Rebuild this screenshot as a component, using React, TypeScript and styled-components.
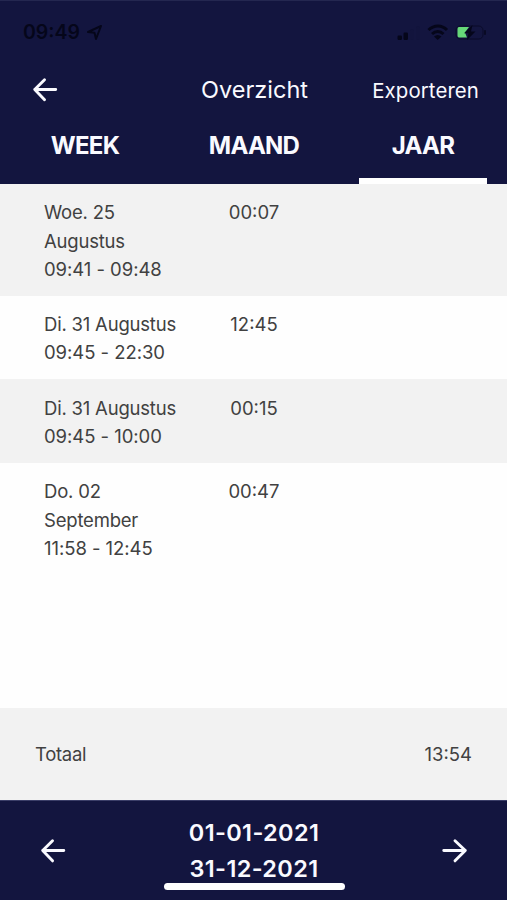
import React from "react";
import styled, { createGlobalStyle } from "styled-components";

const NAVY = "#13153f";
const GREY = "#f2f2f2";

const GlobalStyle = createGlobalStyle`
  * { box-sizing: border-box; }
  body { margin: 0; background: #fff; }
  button { font: inherit; color: inherit; background: none; border: 0; padding: 0; }
`;

const Screen = styled.div`
  display: flex;
  flex-direction: column;
  width: 507px;
  height: 900px;
  overflow: hidden;
  background: #fefefe;
  color: #414141;
  font-family: Inter, "Liberation Sans", sans-serif;
  font-size: 18.5px;
  line-height: 28.35px;
`;

const Header = styled.header`
  flex: none;
  display: flex;
  flex-direction: column;
  height: 184px;
  background: ${NAVY};
  color: #fafaff;
  border-top: 1px solid #242750;
`;

const StatusBar = styled.div`
  display: flex;
  align-items: center;
  justify-content: space-between;
  height: 62px;
  padding: 0 20px 0 23px;
  color: #05061a;
`;

const Clock = styled.div`
  display: flex;
  align-items: center;
  gap: 6px;
  font-size: 19.5px;
  font-weight: 600;
`;

const TitleBar = styled.div`
  display: grid;
  grid-template-columns: 1fr auto 1fr;
  align-items: center;
  height: 54px;
  padding: 0 28px 0 30px;
`;

const IconButton = styled.button`
  display: flex;
  width: 30px;
  height: 30px;
`;

const Title = styled.h1`
  margin: 0;
  padding-top: 1px;
  font-size: 23.5px;
  font-weight: 400;
`;

const Export = styled.button`
  && {
    justify-self: end;
    padding-top: 2px;
    font-size: 20.4px;
    letter-spacing: 0.1px;
  }
`;

const Tabs = styled.nav`
  display: grid;
  grid-template-columns: repeat(3, 128px);
  justify-content: space-between;
  flex: 1;
  padding: 0 20px 0 21px;
`;

const Tab = styled.button<{ $active?: boolean }>`
  && {
    padding-bottom: 4px;
    border-bottom: 6px solid ${(p) => (p.$active ? "#fff" : "transparent")};
    font-size: 24px;
    font-weight: 650;
    line-height: 53px;
    letter-spacing: -0.75px;
  }
`;

const List = styled.main`
  flex: 1;
`;

const Row = styled.div`
  display: grid;
  grid-template-columns: 140px 140px;
  padding: 14.2px 44px 12.7px;
  &:nth-child(odd) { background: ${GREY}; }
`;

const Duration = styled.span`
  text-align: center;
`;

const Line = styled.div`
  letter-spacing: -0.2px;
  white-space: nowrap;
  &:last-child { letter-spacing: -0.05px; }
`;

const Total = styled.section`
  flex: none;
  display: flex;
  align-items: center;
  justify-content: space-between;
  height: 92px;
  padding: 1px 35px 0;
  background: ${GREY};
`;

const TotalLabel = styled.span`
  letter-spacing: -0.3px;
`;

const Footer = styled.footer`
  position: relative;
  flex: none;
  display: flex;
  justify-content: space-between;
  height: 100px;
  padding: 35px 37px 0 38px;
  border-top: 1px solid #3b3e68;
  background: ${NAVY};
  color: #fafaff;
`;

const Period = styled.div`
  margin-top: -21px;
  font-size: 23.5px;
  font-weight: 600;
  line-height: 36px;
  letter-spacing: 0.35px;
  text-align: center;
`;

const HomeIndicator = styled.div`
  position: absolute;
  left: 164px;
  bottom: 10.5px;
  width: 180.5px;
  height: 7px;
  border-radius: 4px;
  background: #fff;
`;

const Arrow = ({ right }: { right?: boolean }) => (
  <svg width="32" height="30" viewBox="0 0 32 30" fill="none" stroke="currentColor" strokeWidth="3.1" strokeLinecap="round" strokeLinejoin="round">
    <path d={right ? "M4 14.5H27M16 4L27 14.5L16 25.5" : "M27.5 14.5H5M15.5 4L5 14.5L15.5 25.5"} />
  </svg>
);

const LocationIcon = () => (
  <svg width="17" height="17" viewBox="0 0 17 17" fill="none" stroke="currentColor" strokeWidth="2" strokeLinejoin="round">
    <path d="M15 2L2 8L8.5 8.7L10 15Z" />
  </svg>
);

const StatusIcons = () => (
  <svg width="92" height="20" viewBox="0 0 92 20" fill="none">
    <rect x="2.5" y="13.5" width="4.5" height="4.5" rx="1.2" fill="#05061a" />
    <rect x="8.5" y="10.5" width="4.5" height="7.5" rx="1.2" fill="#05061a" />
    <rect x="15" y="7" width="4" height="11" rx="1.2" fill="#12143d" />
    <rect x="21" y="4" width="4" height="14" rx="1.2" fill="#12143d" />
    <path d="M33.5 8C39 2.5 47 2.5 52 8M37 12C40.5 8.8 45 8.8 48.5 12" stroke="#05061a" strokeWidth="3" />
    <path d="M39 14.5Q42.5 11.5 46.5 14.5L42.7 18Z" fill="#05061a" />
    <rect x="61" y="4" width="27" height="13" rx="4.2" stroke="#0a0b29" />
    <path d="M90 9V12" stroke="#090a24" strokeWidth="2" strokeLinecap="round" />
    <path d="M64 5H74L70 10.5L72 15.5H64Q62.5 15.5 62.5 13.5V7Q62.5 5 64 5Z" fill="#66d878" />
    <path d="M77.5 3L69 11.2H73.5L72 18L80.5 9.5H76Z" fill="#05061a" />
  </svg>
);

const BackButton = styled(IconButton)`
  svg { width: 30px; height: 28px; margin: 1px 0 0 0; }
`;

const entries = [
  { lines: ["Woe. 25", "Augustus", "09:41 - 09:48"], duration: "00:07" },
  { lines: ["Di. 31 Augustus", "09:45 - 22:30"], duration: "12:45" },
  { lines: ["Di. 31 Augustus", "09:45 - 10:00"], duration: "00:15" },
  { lines: ["Do. 02", "September", "11:58 - 12:45"], duration: "00:47" },
];

export default function App() {
  return (
    <>
      <GlobalStyle />
      <Screen>
        <Header>
          <StatusBar>
            <Clock>09:49 <LocationIcon /></Clock>
            <StatusIcons />
          </StatusBar>
          <TitleBar>
            <BackButton aria-label="Terug"><Arrow /></BackButton>
            <Title>Overzicht</Title>
            <Export>Exporteren</Export>
          </TitleBar>
          <Tabs>
            <Tab>WEEK</Tab>
            <Tab>MAAND</Tab>
            <Tab $active>JAAR</Tab>
          </Tabs>
        </Header>
        <List>
          {entries.map((entry, i) => (
            <Row key={i}>
              <div>{entry.lines.map((line) => <Line key={line}>{line}</Line>)}</div>
              <Duration>{entry.duration}</Duration>
            </Row>
          ))}
        </List>
        <Total><TotalLabel>Totaal</TotalLabel><span>13:54</span></Total>
        <Footer>
          <IconButton aria-label="Vorige"><Arrow /></IconButton>
          <Period><div>01-01-2021</div><div>31-12-2021</div></Period>
          <IconButton aria-label="Volgende"><Arrow right /></IconButton>
          <HomeIndicator />
        </Footer>
      </Screen>
    </>
  );
}
